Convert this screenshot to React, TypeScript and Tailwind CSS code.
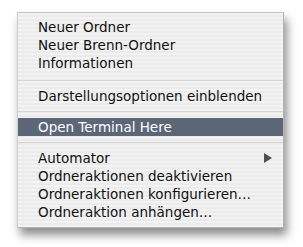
import React from 'react';

type Item = { label: string; highlighted?: boolean; submenu?: boolean } | 'sep' | 'sepWide';

const items: Item[] = [
  { label: 'Neuer Ordner' },
  { label: 'Neuer Brenn-Ordner' },
  { label: 'Informationen' },
  'sepWide',
  { label: 'Darstellungsoptionen einblenden' },
  'sep',
  { label: 'Open Terminal Here', highlighted: true },
  'sep',
  { label: 'Automator', submenu: true },
  { label: 'Ordneraktionen deaktivieren' },
  { label: 'Ordneraktionen konfigurieren…' },
  { label: 'Ordneraktion anhängen…' },
];

const ContextMenu: React.FC = () => {
  return (
    <div className="min-h-screen bg-white pt-[12px] pl-[17px]">
      <div
        className="w-[267px] h-[216px] border border-[#b4b4b4] border-l-[#cfcfcf] border-t-[#c4c4c4] pt-[5px] shadow-[3px_7px_9px_rgba(0,0,0,0.45)] bg-[repeating-linear-gradient(180deg,#f3f3f3_0px,#f3f3f3_2px,#ebebeb_2px,#ebebeb_4px)]"
        style={{ fontFamily: '"DejaVu Sans", "Liberation Sans", sans-serif' }}
      >
        {items.map((item, i) =>
          item === 'sep' || item === 'sepWide' ? (
            <div key={i} className={item === 'sepWide' ? 'h-[15px] pt-[8px]' : 'h-[13px] pt-[6px]'}>
              <div className="w-full h-px bg-[#d4d4d4]" />
            </div>
          ) : (
            <div
              key={i}
              className={`h-[18px] flex items-center justify-between pl-[20px] pr-[11px] text-[13.5px] leading-[18px] ${
                item.highlighted ? 'bg-[#5b6677] text-white' : 'text-[#111]'
              }`}
            >
              <span>{item.label}</span>
              {item.submenu && (
                <svg width="8" height="10" viewBox="0 0 8 10">
                  <polygon points="0,0 8,5 0,10" fill="#505050" />
                </svg>
              )}
            </div>
          )
        )}
      </div>
    </div>
  );
};

export default ContextMenu;
